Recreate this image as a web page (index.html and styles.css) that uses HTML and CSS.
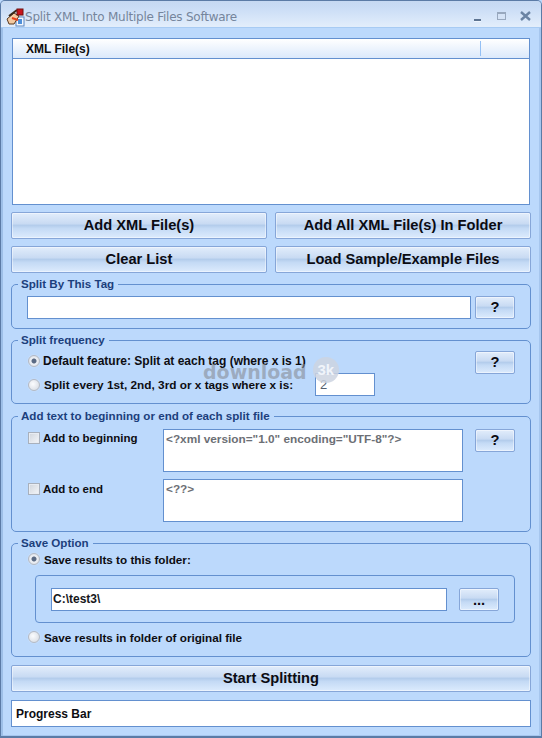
FILE: index.html
```html
<!DOCTYPE html>
<html lang="en">
<head>
<meta charset="utf-8">
<title>Split XML Into Multiple Files Software</title>
<link rel="stylesheet" href="styles.css">
</head>
<body>
<div class="window">
  <header class="titlebar">
    <svg class="app-icon" width="20" height="20" viewBox="0 0 20 20" aria-hidden="true">
      <rect x="11" y="10" width="8" height="9" fill="#f4f8ff" stroke="#5a86c0"/>
      <rect x="13" y="12" width="4" height="5" fill="#4f8fd8"/>
      <path d="M2 12 L9 6 L14 9 L9 17 L4 17 Z" fill="#f3c9a0" stroke="#5a3a20"/>
      <path d="M4 9 L12 3" stroke="#3a2a1a" stroke-width="2"/>
      <path d="M7 11 L13 13" stroke="#e8401c" stroke-width="2"/>
      <rect x="12" y="2" width="6" height="6" fill="#c8141c" stroke="#70100f"/>
    </svg>
    <span class="title-text">Split XML Into Multiple Files Software</span>
    <div class="controls">
      <span class="ctl-min"></span>
      <span class="ctl-max"></span>
      <svg class="ctl-close" width="11" height="10" viewBox="0 0 11 10" aria-hidden="true"><path d="M1 1 L10 9 M10 1 L1 9" stroke="#6b84a4" stroke-width="2.4"/></svg>
    </div>
  </header>

  <main class="content">
    <section class="listview">
      <div class="list-head"><span class="list-col">XML File(s)</span><span class="list-rest"></span></div>
    </section>

    <div class="btn-grid">
      <button class="btn btn-big" type="button">Add XML File(s)</button>
      <button class="btn btn-big" type="button">Add All XML File(s) In Folder</button>
      <button class="btn btn-big" type="button">Clear List</button>
      <button class="btn btn-big" type="button">Load Sample/Example Files</button>
    </div>

    <fieldset class="group group-tag">
      <legend>Split By This Tag</legend>
      <div class="row-tag">
        <div class="field field-tag"></div>
        <button class="btn btn-small" type="button">?</button>
      </div>
    </fieldset>

    <fieldset class="group group-freq">
      <legend>Split frequency</legend>
      <div class="freq-options">
        <label class="opt opt-default"><span class="radio radio-on"></span>Default feature: Split at each tag (where x is 1)</label>
        <label class="opt opt-x"><span class="radio"></span><span class="opt-x-text">Split every 1st, 2nd, 3rd or x tags where x is:</span><span class="field field-x">2</span></label>
      </div>
      <button class="btn btn-small btn-freq" type="button">?</button>
    </fieldset>

    <fieldset class="group group-text">
      <legend>Add text to beginning or end of each split file</legend>
      <div class="text-grid">
        <label class="opt opt-check"><span class="check"></span>Add to beginning</label>
        <div class="field field-area">&lt;?xml version="1.0" encoding="UTF-8"?&gt;</div>
        <button class="btn btn-small" type="button">?</button>
        <label class="opt opt-check opt-end"><span class="check"></span>Add to end</label>
        <div class="field field-area">&lt;??&gt;</div>
      </div>
    </fieldset>

    <fieldset class="group group-save">
      <legend>Save Option</legend>
      <label class="opt opt-save1"><span class="radio radio-on"></span>Save results to this folder:</label>
      <div class="folder-box">
        <div class="field field-path">C:\test3\</div>
        <button class="btn btn-small btn-dots" type="button">...</button>
      </div>
      <label class="opt opt-save2"><span class="radio"></span>Save results in folder of original file</label>
    </fieldset>

    <button class="btn btn-big btn-start" type="button">Start Splitting</button>
    <div class="progress">Progress Bar</div>
  </main>

  <div class="watermark" aria-hidden="true"><span class="wm-word">download</span><span class="wm-badge">3k</span></div>
</div>
</body>
</html>
```
FILE: styles.css
```css
* { box-sizing: border-box; }
html, body { margin: 0; padding: 0; }
body {
  width: 542px;
  height: 738px;
  overflow: hidden;
  font-family: "Liberation Sans", Arial, sans-serif;
  background: #bcd9fc;
}
.window {
  position: relative;
  width: 542px;
  height: 738px;
  display: flex;
  flex-direction: column;
  background: #bcd9fc;
  border-style: solid;
  border-color: #5b7ba6;
  border-width: 1px 1px 2px 1px;
  border-radius: 5px 5px 0 0;
  box-shadow: inset 2px 0 0 #9dbfe8, inset -2px 0 0 #a6c6ee, inset 0 -1px 0 #a6c6ee;
}
.titlebar {
  height: 27px;
  flex: none;
  display: flex;
  align-items: center;
  padding: 5px 10px 0 4px;
  background: linear-gradient(#c6d9f2 0, #c9dcf5 6px, #d3e3f8 14px, #e2edfb 25px);
  border-bottom: 1px solid #a8cbf3;
  border-radius: 4px 4px 0 0;
}
.app-icon { flex: none; width: 20px; height: 20px; }
.title-text {
  font-family: "DejaVu Sans", sans-serif;
  font-size: 12px;
  color: #75859c;
  white-space: nowrap;
  letter-spacing: -0.02em;
}
.controls {
  margin-left: auto;
  display: flex;
  align-items: center;
  gap: 16px;
  margin-top: -1px;
}
.ctl-min {
  display: block;
  width: 7px;
  height: 3px;
  margin-top: 8px;
  background: #5d7492;
  border-bottom: 1px solid #eef5fe;
}
.ctl-max {
  display: block;
  width: 9px;
  height: 8px;
  border: 1px solid #98a8be;
  border-top-width: 2px;
  background: #d5e3f6;
}
.ctl-close { margin-left: -2px; }

.content {
  flex: 1;
  display: flex;
  flex-direction: column;
  padding: 10px 10px 0 10px;
}
.listview {
  width: 518px;
  margin-left: 1px;
  height: 167px;
  background: #fff;
  border: 1px solid #6390cf;
  flex: none;
}
.list-head {
  height: 20px;
  display: flex;
  background: linear-gradient(#fff, #dbe9fb);
  border-bottom: 1px solid #6390cf;
  font-size: 12px;
  font-weight: 700;
  color: #0d0d0d;
}
.list-col {
  width: 468px;
  padding-left: 13px;
  border-right: 1px solid #93c0f5;
  margin: 2px 0 2px;
  line-height: 17px;
}
.list-rest { flex: 1; }

.btn {
  margin: 0;
  padding: 0 0 2px;
  font-family: "Liberation Sans", Arial, sans-serif;
  font-weight: 700;
  color: #0b0b12;
  border: 1px solid #86a6d8;
  border-radius: 2px;
  background: linear-gradient(#e2edfb 0, #c9dbf3 42%, #b4cdec 50%, #c4daf5 62%, #dcebfd 100%);
  box-shadow: inset 0 0 0 1px rgba(255,255,255,.45);
  cursor: default;
}
.btn-big { height: 27px; font-size: 14.67px; }
.btn-small { width: 40px; height: 23px; font-size: 14.67px; flex: none; }
.btn-dots { padding: 0; }
.btn-grid {
  display: grid;
  grid-template-columns: 256px 256px;
  column-gap: 8px;
  row-gap: 7px;
  margin-top: 7px;
  flex: none;
}

.group {
  position: relative;
  margin: 0;
  padding: 0;
  min-width: 0;
  width: 520px;
  border: 1px solid #6390cf;
  border-radius: 5px;
  flex: none;
}
.group legend {
  margin-left: 6px;
  padding: 0 4px 0 3px;
  font-size: 11.6px;
  font-weight: 700;
  line-height: 14px;
  color: #1c3f7c;
  white-space: nowrap;
}
.group-tag { margin-top: 4px; height: 52px; }
.group-freq { margin-top: 4px; height: 71px; display: flex; }
.group-text { margin-top: 5px; height: 123px; }
.group-save { margin-top: 4px; height: 121px; }

.field {
  background: #fff;
  border: 1px solid #6390cf;
  font-size: 12px;
  font-weight: 700;
}
.row-tag {
  display: flex;
  gap: 4px;
  padding: 5px 0 0 15px;
}
.field-tag { width: 444px; height: 23px; }

.freq-options { padding: 7px 0 0 16px; width: 463px; }
.btn-freq { margin-top: 4px; }
.opt {
  display: flex;
  align-items: center;
  font-size: 11.7px;
  font-weight: 700;
  color: #0d0d12;
  white-space: nowrap;
}
.radio {
  flex: none;
  width: 12px;
  height: 12px;
  margin-right: 4px;
  border-radius: 50%;
  border: 1px solid #b4bac4;
  background: radial-gradient(circle at 40% 40%, #fbfcfe, #d2d7df);
  box-shadow: 0 0 1px #eef3fa;
}
.radio-on { background: radial-gradient(circle, #5a6a84 0, #5a6a84 2px, #eef1f6 3px, #d2d7df); }
.opt-default { font-size: 12px; height: 14px; }
.opt-default .radio { margin-right: 3px; }
.opt-x { margin-top: 5px; height: 23px; font-size: 11.8px; }
.opt-x-text { width: 271px; }
.field-x {
  display: block;
  width: 60px;
  height: 23px;
  padding: 3px 0 0 4px;
  font-weight: 400;
  color: #55606e;
  font-size: 13px;
  line-height: 16px;
}

.text-grid {
  display: grid;
  grid-template-columns: 135px 300px 52px;
  grid-template-rows: 43px 43px;
  row-gap: 7px;
  padding: 6px 0 0 16px;
}
.text-grid .btn { margin-left: 12px; }
.opt-check { align-items: flex-start; font-size: 11.5px; line-height: 14px; padding-top: 2px; }
.opt-end { padding-top: 3px; }
.check {
  flex: none;
  width: 12px;
  height: 12px;
  margin: 1px 3px 0 0;
  border: 1px solid #a8b0bc;
  background: linear-gradient(135deg, #d0d5dc, #f4f6f9);
  box-shadow: inset 0 0 0 1px #e8ecf2;
}
.field-area {
  height: 43px;
  padding: 2px;
  font-size: 11.8px;
  color: #6c6f75;
  line-height: 15px;
  white-space: nowrap;
}

.opt-save1 { padding-left: 16px; margin-top: 2px; height: 14px; }
.opt-save2 { padding-left: 16px; margin-top: 7px; height: 14px; }
.folder-box {
  display: flex;
  gap: 12px;
  width: 480px;
  height: 48px;
  margin: 9px 0 0 23px;
  padding: 12px 0 0 15px;
  border: 1px solid #6390cf;
  border-radius: 4px;
}
.field-path {
  width: 396px;
  height: 23px;
  padding: 0 1px;
  line-height: 21px;
  color: #16161a;
}

.btn-start { width: 520px; margin-top: 8px; flex: none; }
.progress {
  width: 520px;
  height: 27px;
  margin-top: 8px;
  padding-left: 4px;
  background: #fff;
  border: 1px solid #6390cf;
  font-size: 12px;
  font-weight: 700;
  line-height: 27px;
  color: #0d0d12;
  flex: none;
}

.watermark {
  position: absolute;
  left: 202px;
  top: 356px;
  display: flex;
  align-items: center;
  pointer-events: none;
}
.wm-word {
  font-family: "DejaVu Sans", sans-serif;
  font-size: 19px;
  font-weight: 700;
  color: rgba(135,140,150,.6);
  line-height: 24px;
  transform: translateY(2px);
}
.wm-badge {
  width: 26px;
  height: 26px;
  margin-left: 6px;
  border-radius: 50%;
  background: rgba(205,212,224,.85);
  color: #f0f4fa;
  font-size: 15px;
  font-weight: 700;
  text-align: center;
  line-height: 26px;
}
```
